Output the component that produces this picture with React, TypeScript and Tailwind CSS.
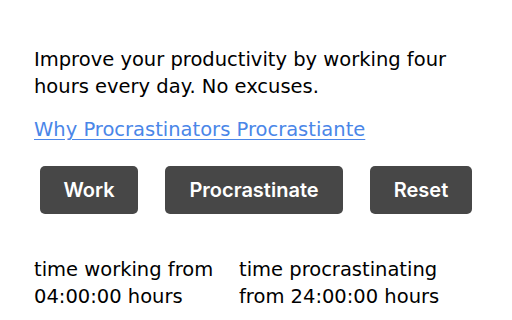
export default function App() {
  return (
    <div className="w-[512px] h-[320px] bg-white overflow-hidden pl-[34px] pt-[46px] text-black">
      <p className="font-['DejaVu_Sans',sans-serif] text-[19.5px] leading-[27px] w-[450px]">
        Improve your productivity by working four hours every day. No excuses.
      </p>
      <a href="#" className="block mt-[16px] font-['DejaVu_Sans',sans-serif] text-[19.5px] leading-[27px] text-[#4a86e8] underline underline-offset-[3px]">
        Why Procrastinators Procrastiante
      </a>
      <div className="flex gap-[27px] ml-[6px] mt-[23px]">
        <button className="h-[48px] w-[98px] rounded-[5px] bg-[#474747] text-white font-['Inter',sans-serif] font-semibold text-[20px]">Work</button>
        <button className="h-[48px] w-[178px] rounded-[5px] bg-[#474747] text-white font-['Inter',sans-serif] font-semibold text-[20px]">Procrastinate</button>
        <button className="h-[48px] w-[102px] rounded-[5px] bg-[#474747] text-white font-['Inter',sans-serif] font-semibold text-[20px]">Reset</button>
      </div>
      <div className="flex mt-[42px] font-['DejaVu_Sans',sans-serif] text-[19.5px] leading-[27px]">
        <div className="w-[205px]">time working from 04:00:00 hours</div>
        <div className="w-[225px]">time procrastinating from 24:00:00 hours</div>
      </div>
    </div>
  );
}
